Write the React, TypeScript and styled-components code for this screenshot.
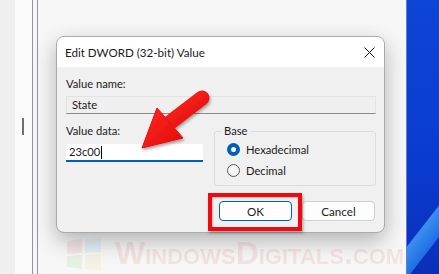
import React from 'react';
import styled, { createGlobalStyle } from 'styled-components';

const GlobalStyle = createGlobalStyle`
  html, body { margin: 0; padding: 0; }
  body {
    font-family: Lato, "Noto Sans", "Liberation Sans", sans-serif;
    font-size: 11.2px;
    color: #1a1a1a;
  }
`;

const Page = styled.div`
  position: relative;
  display: flex;
  width: 439px;
  height: 274px;
  overflow: hidden;
  background: #fbfbfb;
`;

const Gutter = styled.div`
  width: 32px;
  display: flex;
  background: linear-gradient(to right, #efefef 0, #efefef 15px, #fafafa 15px);
`;

const ScrollMark = styled.div`
  width: 2px;
  height: 17px;
  margin: 118px 0 0 22px;
  background: #6f6f6f;
`;

const Divider = styled.div`
  width: 4px;
  border-left: 1px solid #8d97a8;
  border-right: 1px solid #8d97a8;
  background: #f6f6f6;
`;

const Stage = styled.div`
  flex: 1;
  padding: 36px 0 0 18px;
  background: #f7f7f7;
`;

const Desktop = styled.div`
  width: 32px;
  background:
    linear-gradient(128deg, transparent 0 78%, #3d8ef0 78.5%, #1f6fe6 88%, transparent 88.5%),
    linear-gradient(to bottom, #0d45d6 0%, #0a3bd0 60%, #0b2fb8 100%);
  border-left: 1px solid #5d7fd0;
`;

const Dialog = styled.div`
  width: 329px;
  height: 197px;
  border-radius: 8px;
  border: 1px solid #a9a9a9;
  box-sizing: border-box;
  overflow: hidden;
  background: #f0f0f0;
  box-shadow: 0 8px 22px rgba(0, 0, 0, 0.28);
  display: flex;
  flex-direction: column;
`;

const TitleBar = styled.div`
  height: 30px;
  background: #ffffff;
  display: flex;
  align-items: center;
  justify-content: space-between;
  padding: 0 7px 0 8px;
  font-size: 11.6px;
`;

const CloseIcon = styled.svg`
  width: 11px;
  height: 11px;
  margin-right: 2px;
`;

const Body = styled.div`
  flex: 1;
  padding: 9px 8px 0 9px;
  display: flex;
  flex-direction: column;
`;

const Label = styled.div`
  line-height: 16px;
  height: 16px;
`;

const ReadField = styled.div`
  margin-top: 4px;
  height: 18px;
  box-sizing: border-box;
  border: 1px solid #e3e3e3;
  border-bottom: 1px solid #8a8a8a;
  background: #efefef;
  padding: 0 5px;
  line-height: 16px;
`;

const Row = styled.div`
  display: flex;
  align-items: flex-start;
  margin-top: 9px;
  gap: 11px;
`;

const LeftCol = styled.div`
  width: 137px;
  display: flex;
  flex-direction: column;
`;

const Input = styled.div`
  margin-top: 5px;
  height: 18px;
  box-sizing: border-box;
  background: #ffffff;
  border-bottom: 2px solid #005fb8;
  padding: 0 3px;
  line-height: 16px;
  display: flex;
  align-items: center;
`;

const Caret = styled.span`
  display: inline-block;
  width: 1px;
  height: 13px;
  background: #000;
  margin-left: 1px;
`;

const GroupBox = styled.fieldset`
  flex: 1;
  margin: 1px 0 0 0;
  height: 62px;
  box-sizing: border-box;
  border: 1px solid #dcdcdc;
  border-radius: 3px;
  padding: 3px 0 0 12px;
  display: flex;
  flex-direction: column;
  gap: 5px;
`;

const Legend = styled.legend`
  padding: 0 3px;
  margin-left: -6px;
  line-height: 14px;
`;

const RadioRow = styled.div`
  display: flex;
  align-items: center;
  gap: 6px;
  height: 16px;
`;

const Radio = styled.span<{ $checked?: boolean }>`
  width: 13px;
  height: 13px;
  box-sizing: border-box;
  border-radius: 50%;
  border: ${(p) => (p.$checked ? '4px solid #005fb8' : '1px solid #5a5a5a')};
  background: ${(p) => (p.$checked ? '#ffffff' : '#f7f7f7')};
`;

const Buttons = styled.div`
  display: flex;
  justify-content: flex-end;
  gap: 10px;
  margin-top: 15px;
  padding-right: 1px;
`;

const Button = styled.div<{ $primary?: boolean }>`
  width: 73px;
  height: 20px;
  box-sizing: border-box;
  border-radius: 4px;
  background: #fdfdfd;
  border: 1px solid ${(p) => (p.$primary ? '#005fb8' : '#d0d0d0')};
  display: flex;
  align-items: center;
  justify-content: center;
  font-size: 11.6px;
`;

const Highlight = styled.div`
  position: absolute;
  left: 208px;
  top: 193px;
  width: 94px;
  height: 38px;
  box-sizing: border-box;
  border: 4px solid #ee0a10;
  box-shadow: 1px 2px 3px rgba(0, 0, 0, 0.35), inset 1px 1px 2px rgba(0, 0, 0, 0.2);
`;

const ArrowSvg = styled.svg`
  position: absolute;
  left: 0;
  top: 0;
  width: 439px;
  height: 274px;
  pointer-events: none;
`;

const Watermark = styled.div`
  position: absolute;
  left: 65px;
  top: 235px;
  display: flex;
  align-items: center;
  gap: 12px;
  opacity: 0.09;
  pointer-events: none;
`;

const WatermarkText = styled.span`
  font-family: "Liberation Sans", sans-serif;
  font-weight: 700;
  font-size: 32px;
  font-variant: small-caps;
  color: #d21a1a;
`;

const Logo = styled.svg`
  width: 38px;
  height: 34px;
`;

export default function App() {
  return (
    <>
      <GlobalStyle />
      <Page>
        <Gutter>
          <ScrollMark />
        </Gutter>
        <Divider />
        <Stage>
          <Dialog>
            <TitleBar>
              <span>Edit DWORD (32-bit) Value</span>
              <CloseIcon viewBox="0 0 11 11">
                <path d="M0.5 0.5 L10.5 10.5 M10.5 0.5 L0.5 10.5" stroke="#111" strokeWidth="1" />
              </CloseIcon>
            </TitleBar>
            <Body>
              <Label>Value name:</Label>
              <ReadField>State</ReadField>
              <Row>
                <LeftCol>
                  <Label>Value data:</Label>
                  <Input>
                    23c00<Caret />
                  </Input>
                </LeftCol>
                <GroupBox>
                  <Legend>Base</Legend>
                  <RadioRow>
                    <Radio $checked />
                    Hexadecimal
                  </RadioRow>
                  <RadioRow>
                    <Radio />
                    Decimal
                  </RadioRow>
                </GroupBox>
              </Row>
              <Buttons>
                <Button $primary>OK</Button>
                <Button>Cancel</Button>
              </Buttons>
            </Body>
          </Dialog>
        </Stage>
        <Desktop />

        <Watermark>
          <Logo viewBox="0 0 38 34">
            <path d="M2 4 L17 2 L17 16 L2 17 Z" fill="#e04040" />
            <path d="M20 2 L36 0 L36 15 L20 16 Z" fill="#40a0e0" />
            <path d="M2 19 L17 18 L17 32 L2 30 Z" fill="#40c040" />
            <path d="M20 18 L36 17 L36 34 L20 32 Z" fill="#f0c020" />
          </Logo>
          <WatermarkText>WindowsDigitals.com</WatermarkText>
        </Watermark>

        <Highlight />

        <ArrowSvg viewBox="0 0 439 274">
          <defs>
            <filter id="sh" x="-20%" y="-20%" width="140%" height="140%">
              <feDropShadow dx="1" dy="2" stdDeviation="1.5" floodColor="#000" floodOpacity="0.35" />
            </filter>
            <linearGradient id="rg" x1="0" y1="0" x2="1" y2="1">
              <stop offset="0" stopColor="#ff2a1f" />
              <stop offset="1" stopColor="#e00a0a" />
            </linearGradient>
          </defs>
          <g filter="url(#sh)">
            <line x1="202" y1="98" x2="168" y2="124" stroke="url(#rg)" strokeWidth="15" strokeLinecap="round" />
            <path d="M142 148 L157 108 L183 138 Z" fill="url(#rg)" strokeLinejoin="round" stroke="#e81010" strokeWidth="1" />
          </g>
        </ArrowSvg>
      </Page>
    </>
  );
}
